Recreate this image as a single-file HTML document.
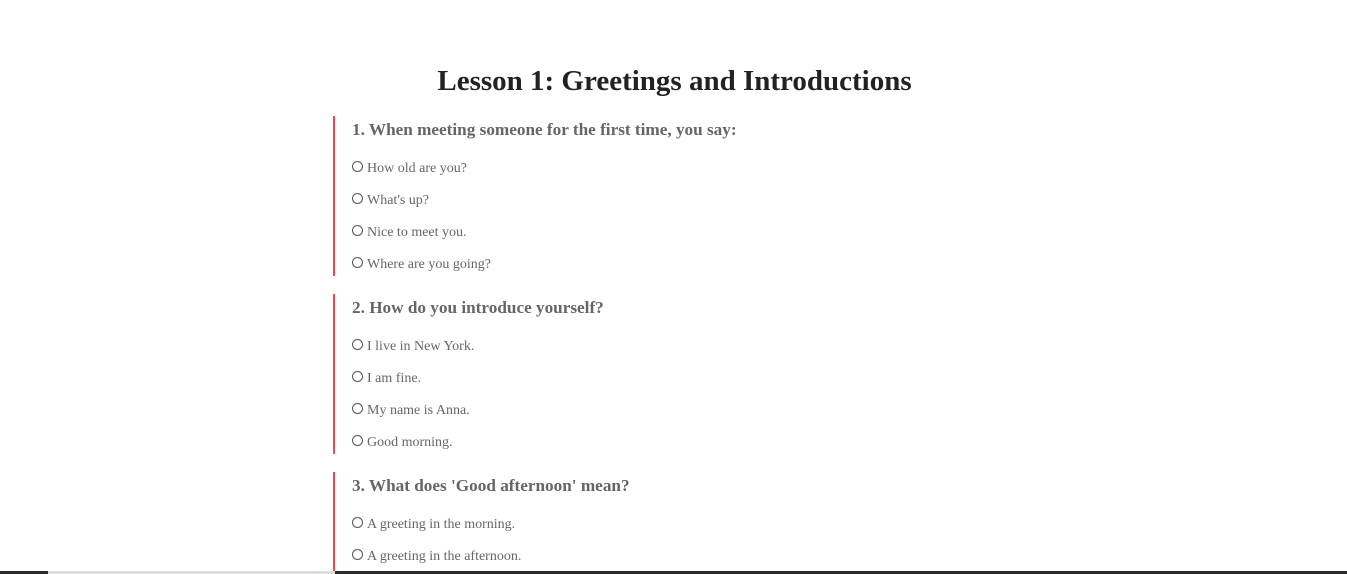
<!DOCTYPE html>
<html style="overflow:hidden;height:574px"><head><style>
body{margin:0;background:#fff;font-family:"Liberation Serif",serif;width:1347px;height:574px;overflow:hidden;position:relative}
h1{position:absolute;top:63px;left:0;width:1349px;text-align:center;margin:0;font-size:29px;line-height:36px;color:#222;font-weight:bold}
.q{position:absolute;left:333px;border-left:2px solid #f0484e;width:600px;height:160px}
.q h3{margin:0;position:absolute;left:17px;top:4px;font-size:17.2px;color:#666;line-height:20px}
.o{position:absolute;left:17px;font-size:14px;color:#666;line-height:18px}
.o i{display:inline-block;width:9px;height:9px;border:1px solid #555;border-radius:50%;margin-right:4px;vertical-align:0px}
.bar{position:absolute;left:0;top:571px;height:3px;width:1347px;background:#2a2a26}
</style></head><body>
<h1>Lesson 1: Greetings and Introductions</h1>
<div class="q" style="top:116px"><h3>1. When meeting someone for the first time, you say:</h3>
<div class="o" style="top:44px"><i></i>How old are you?</div>
<div class="o" style="top:76px"><i></i>What's up?</div>
<div class="o" style="top:108px"><i></i>Nice to meet you.</div>
<div class="o" style="top:140px"><i></i>Where are you going?</div></div>
<div class="q" style="top:294px"><h3>2. How do you introduce yourself?</h3>
<div class="o" style="top:44px"><i></i>I live in New York.</div>
<div class="o" style="top:76px"><i></i>I am fine.</div>
<div class="o" style="top:108px"><i></i>My name is Anna.</div>
<div class="o" style="top:140px"><i></i>Good morning.</div></div>
<div class="q" style="top:472px;height:102px"><h3>3. What does 'Good afternoon' mean?</h3>
<div class="o" style="top:44px"><i></i>A greeting in the morning.</div>
<div class="o" style="top:76px"><i></i>A greeting in the afternoon.</div></div>
<div class="bar"></div>
<div style="position:absolute;left:48px;top:571px;width:287px;height:3px;background:#ddd"></div>
</body></html>
